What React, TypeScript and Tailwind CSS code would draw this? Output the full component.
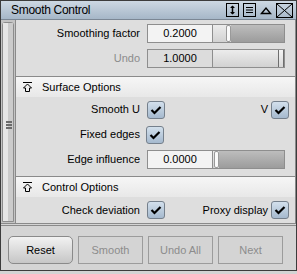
import React from "react";

const font = { fontFamily: '"Liberation Sans", Arial, sans-serif' };

function Check() {
  return (
    <div className="w-[18px] h-[18px] rounded-[3px] border border-[#75808c] bg-gradient-to-b from-[#d3e0ec] to-[#a5b9ce] flex items-center justify-center">
      <svg width="12" height="10" viewBox="0 0 12 10">
        <path d="M1.5 5 L4.5 8 L10.5 2" stroke="#000" strokeWidth="2.2" fill="none" />
      </svg>
    </div>
  );
}

function Field({ value, disabled }: { value: string; disabled?: boolean }) {
  return (
    <div
      className={
        "w-[66px] h-[19px] border border-[#8e8e8e] flex items-center justify-center text-[11px] text-black " +
        (disabled ? "bg-[#dcdcdc]" : "bg-[#f3f3f3]")
      }
    >
      {value}
    </div>
  );
}

function Slider({ pos, full }: { pos: number; full?: boolean }) {
  if (full) {
    return (
      <div className="w-[72px] h-[19px] border border-[#8e8e8e] border-l-0 bg-gradient-to-b from-[#ececec] to-[#d2d2d2] flex justify-end">
        <div className="w-[6px] h-full border-x border-[#6e6e6e] bg-gradient-to-b from-[#f4f4f4] to-[#d8d8d8]" />
      </div>
    );
  }
  return (
    <div className="w-[72px] h-[19px] border border-[#8e8e8e] border-l-0 flex">
      <div className="h-full bg-gradient-to-b from-[#ececec] to-[#d2d2d2]" style={{ width: pos }} />
      <div className="w-[5px] h-full rounded-[2px] border border-[#9a9a9a] bg-[#fafafa]" />
      <div className="flex-1 h-full bg-gradient-to-b from-[#bdbdbd] to-[#9c9c9c]" />
    </div>
  );
}

function Label({ children, gray }: { children: React.ReactNode; gray?: boolean }) {
  return (
    <div className={"w-[125px] text-right text-[11px] pr-[1px] " + (gray ? "text-[#8c8c8c]" : "text-black")}>
      {children}
    </div>
  );
}

function CollapseIcon() {
  return (
    <svg width="9" height="10" viewBox="0 0 9 10" className="shrink-0" shapeRendering="crispEdges">
      <path d="M0 0.5 H9" stroke="#000" strokeWidth="1" />
      <path d="M4.5 2 L8.5 6 H6.5 V9.5 H2.5 V6 H0.5 Z" stroke="#000" strokeWidth="1" fill="none" shapeRendering="auto" />
    </svg>
  );
}

function Header({ title }: { title: string }) {
  return (
    <div className="h-[21px] border-t border-[#8a8a8a] bg-gradient-to-b from-[#f6f6f6] to-[#e8e8e8] flex items-center pl-[7px] text-[11px] text-black">
      <CollapseIcon />
      <span className="ml-[10px]">{title}</span>
    </div>
  );
}

function Btn({ label, primary }: { label: string; primary?: boolean }) {
  if (primary) {
    return (
      <div className="w-[65px] h-[28px] rounded-[5px] border border-[#8a8a8a] bg-gradient-to-b from-[#f2f2f2] to-[#c6c6c6] flex items-center justify-center text-[11px] text-black">
        {label}
      </div>
    );
  }
  return (
    <div className="w-[65px] h-[28px] border border-[#9c9c9c] flex items-center justify-center text-[11px] text-[#8c8c8c]">
      {label}
    </div>
  );
}

export default function App() {
  return (
    <div className="w-[297px] h-[274px] bg-[#d4d4d4] overflow-hidden" style={font}>
      <div className="w-[297px] h-[271px] border border-[#3c3c3c] flex flex-col">
        {/* title bar */}
        <div className="h-[19px] bg-gradient-to-b from-[#cdd8e3] to-[#a6b7c8] flex items-center pl-[10px] pr-[3px] border-b border-[#7b8794]">
          <span className="text-[12px] text-black tracking-[-0.3px]">Smooth Control</span>
          <div className="ml-auto flex items-center gap-[4px]">
            <svg width="13" height="14" viewBox="0 0 13 14">
              <rect x="0.5" y="0.5" width="12" height="13" fill="none" stroke="#000" />
              <path d="M6.5 3 V11" stroke="#000" strokeWidth="1.5" />
              <path d="M4 5 L6.5 2.5 L9 5 Z M4 9 L6.5 11.5 L9 9 Z" fill="#000" />
            </svg>
            <svg width="13" height="14" viewBox="0 0 13 14">
              <rect x="0.5" y="0.5" width="12" height="13" fill="none" stroke="#000" />
              <path d="M3 4.5 H10 M3 7 H10 M3 9.5 H10" stroke="#000" strokeWidth="1" />
            </svg>
            <svg width="12" height="14" viewBox="0 0 12 14">
              <path d="M1.5 10.5 L6 5 L10.5 10.5 Z" fill="none" stroke="#000" strokeWidth="1.4" />
            </svg>
            <svg width="17" height="15" viewBox="0 0 17 15">
              <rect x="0.5" y="0.5" width="16" height="14" fill="none" stroke="#000" />
              <path d="M1 1 L16 14 M16 1 L1 14" stroke="#000" strokeWidth="1" />
            </svg>
          </div>
        </div>

        {/* main area */}
        <div className="h-[206px] flex border-b-[3px] border-double border-[#8a8a8a]">
          {/* scrollbar */}
          <div className="w-[15px] h-full bg-[#c4c4c4] border-r border-[#8a8a8a] p-[1px] pt-[2px]">
            <div className="h-full rounded-t-[3px] border border-[#8c8c8c] flex relative">
              <div className="w-1/2 h-full bg-[#e6e6e6]" />
              <div className="w-1/2 h-full bg-[#cbcbcb]" />
              <div className="absolute left-[3px] top-[98px] flex flex-col gap-[1px]">
                <div className="w-[6px] h-[2px] bg-[#6c6c6c]" />
                <div className="w-[6px] h-[2px] bg-[#6c6c6c]" />
                <div className="w-[6px] h-[2px] bg-[#6c6c6c]" />
              </div>
            </div>
          </div>
          {/* content */}
          <div className="flex-1 h-full bg-[#dedede] border-r border-[#8a8a8a] flex flex-col">
            <div className="pt-[4px] flex flex-col gap-[6px] pb-[8px]">
              <div className="flex items-center h-[19px]">
                <Label>Smoothing factor</Label>
                <div className="ml-[6px] flex">
                  <Field value="0.2000" />
                  <Slider pos={13} />
                </div>
              </div>
              <div className="flex items-center h-[19px]">
                <Label gray>Undo</Label>
                <div className="ml-[6px] flex">
                  <Field value="1.0000" disabled />
                  <Slider pos={0} full />
                </div>
              </div>
            </div>
            <Header title="Surface Options" />
            <div className="pt-[3px] flex flex-col gap-[6px] pb-[7px]">
              <div className="flex items-center h-[19px]">
                <Label>Smooth U</Label>
                <div className="ml-[6px]"><Check /></div>
                <span className="ml-auto text-[11px] mr-[3px]">V</span>
                <div className="mr-[6px]"><Check /></div>
              </div>
              <div className="flex items-center h-[19px]">
                <Label>Fixed edges</Label>
                <div className="ml-[5px]"><Check /></div>
              </div>
              <div className="flex items-center h-[19px]">
                <Label>Edge influence</Label>
                <div className="ml-[6px] flex">
                  <Field value="0.0000" />
                  <Slider pos={1} />
                </div>
              </div>
            </div>
            <Header title="Control Options" />
            <div className="pt-[3px] flex items-center h-[23px]">
              <Label>Check deviation</Label>
              <div className="ml-[6px]"><Check /></div>
              <span className="ml-auto text-[11px] mr-[3px]">Proxy display</span>
              <div className="mr-[6px]"><Check /></div>
            </div>
          </div>
        </div>

        {/* buttons */}
        <div className="flex-1 flex items-start pt-[10px] pl-[7px] gap-[5px]">
          <Btn label="Reset" primary />
          <Btn label="Smooth" />
          <Btn label="Undo All" />
          <Btn label="Next" />
        </div>
      </div>
    </div>
  );
}
